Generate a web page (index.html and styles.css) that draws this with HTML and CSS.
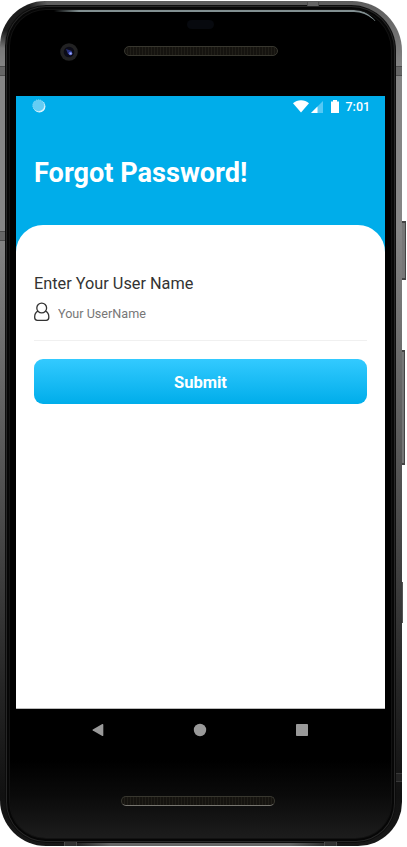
FILE: index.html
```
<!DOCTYPE html>
<html lang="en">
<head>
<meta charset="utf-8">
<meta name="viewport" content="width=device-width, initial-scale=1">
<title>Forgot Password</title>
<link rel="stylesheet" href="styles.css">
</head>
<body>
<div class="phone">
  <span class="side-key power"></span>
  <span class="side-key volume"></span>
  <span class="side-key lower"></span>
  <div class="bezel">
    <span class="band band-left-top"></span>
    <span class="band band-right-top"></span>
    <span class="band band-left-mid"></span>
    <span class="band band-right-low"></span>
    <span class="band band-top"></span>
    <span class="band band-foot-left"></span>
    <span class="band band-foot-right"></span>
    <span class="highlight"></span>
    <span class="sensor"></span>
    <div class="top-bezel">
      <svg class="camera" width="18" height="18" viewBox="0 0 18 18">
        <circle cx="9" cy="9" r="8.8" fill="#222223"/>
        <circle cx="9" cy="9" r="5.3" fill="#0b0b17"/>
        <path d="M6 6l3 1 3 1-1 4-3-1z" fill="#27307c"/>
        <circle cx="10.5" cy="10.5" r="1.8" fill="#6371d8"/>
        <circle cx="10.7" cy="10.5" r=".8" fill="#aebaff"/>
      </svg>
      <span class="speaker"></span>
    </div>
    <main class="screen">
      <header class="header">
        <div class="status">
          <svg width="14" height="14" viewBox="0 0 14 14">
            <circle cx="7.4" cy="7.4" r="6" fill="#e4f7fe"/>
            <circle cx="6.5" cy="6.5" r="5.8" fill="#65cdf4"/>
            <circle cx="6.5" cy="6.5" r="5.8" fill="none" stroke="#9bdff8" stroke-width=".8" stroke-dasharray="1 1"/>
          </svg>
          <div class="status-right">
            <svg width="78" height="16" viewBox="0 0 78 16">
              <path d="M0 4.200C4.200.2 11.800.2 16 4.200L8 13.500z" fill="#fff"/>
              <path d="M30 2v12H18z" fill="#55c9f5"/>
              <path d="M24.500 7.500V14H18z" fill="#fff"/>
              <path d="M38 2.500h2V1h4v1.500h2V14h-8z" fill="#fff"/>
              <text class="time" x="52.500" y="12.300">7:01</text>
            </svg>
          </div>
        </div>
        <h1>Forgot Password!</h1>
      </header>
      <form class="sheet">
        <label for="user">Enter Your User Name</label>
        <div class="field">
          <svg width="16" height="20" viewBox="0 0 16 20" fill="none" stroke="#333" stroke-width="1.300">
            <circle cx="7.700" cy="6" r="4.900"/>
            <path d="M4 9.200C1.600 10.300.7 12.200.7 14.800v.8c0 1.900.9 2.700 2.600 2.700h8.900c1.700 0 2.600-.8 2.600-2.700v-.8c0-2.600-.9-4.500-3.300-5.600"/>
          </svg>
          <input id="user" type="text" placeholder="Your UserName">
        </div>
        <button type="button">Submit</button>
      </form>
    </main>
    <nav class="nav">
      <svg width="12" height="14" viewBox="0 0 12 14"><path d="M.8 6.500Q0 7 .8 7.500L10.300 13q1 .3 1-.8V1.800q0-1.100-1-.8z" fill="#999"/></svg>
      <svg width="14" height="14" viewBox="0 0 14 14"><circle cx="7" cy="7" r="6.200" fill="#999"/></svg>
      <svg width="12" height="12" viewBox="0 0 12 12"><rect width="12" height="12" rx=".8" fill="#999"/></svg>
    </nav>
    <div class="chin"><span class="speaker speaker-low"></span></div>
  </div>
</div>
</body>
</html>
```
FILE: styles.css
```
* { box-sizing: border-box; }
body {
  margin: 0;
  height: 847px;
  overflow: hidden;
  background: #fff;
  font-family: Roboto, "Liberation Sans", sans-serif;
}
.phone {
  position: relative;
  width: 402px;
  height: 845px;
  margin-top: 1px;
  padding: 4px 6px 3px 5px;
  border-radius: 45px 50px 44px 46px;
  background:
    radial-gradient(circle at 10px 10px, #1c1c1c 20px, transparent 38px),
    linear-gradient(90deg, transparent 70px, #666 110px 290px, transparent 340px) bottom / 100% 4px no-repeat,
    linear-gradient(#5c5c5c 0, #858585 8%, #858585 27%, #666 45%, #444 65%, #242424 82%, #111 94%, #181818 100%);
}
.bezel {
  height: 838px;
  border-radius: 41px 45px 40px 41px;
  padding: 0 11px;
  background: linear-gradient(transparent 755px, #0a0a0a 790px, #1e1e1e 837px), #000;
  box-shadow: inset 0 0 0 1px #0c0c0c, inset 0 0 0 2px #262626, inset 0 0 0 4px #060606, inset 0 0 0 5px #121212;
}
.side-key {
  position: absolute;
  left: 402px;
  width: 4px;
  background: #777;
  border: 1px solid #444;
  border-width: 2px 1px 2px 0;
}
.power { top: 220px; height: 59px; }
.volume { top: 349px; height: 115px; width: 3px; }
.lower { top: 581px; height: 41px; width: 1px; border: 0; background: #555; }
.band { position: absolute; background: #666; border: 1px solid #4c4c4c; border-width: 1px 0; }
.band-left-top { left: 0; top: 65px; width: 5px; height: 10px; }
.band-right-top { left: 396px; top: 65px; width: 6px; height: 10px; }
.band-left-mid { left: 0; top: 230px; width: 5px; height: 10px; }
.band-right-low { left: 396px; top: 772px; width: 6px; height: 9px; background: #222; border-color: #383838; }
.band-top { left: 307px; top: 1px; width: 12px; height: 4px; border-width: 0 1px; }
.band-foot-left { left: 64px; top: 841px; width: 13px; height: 4px; background: #333; border-width: 0 1px; }
.band-foot-right { left: 324px; top: 841px; width: 13px; height: 4px; background: #333; border-width: 0 1px; }
.highlight {
  position: absolute;
  left: 54px;
  top: 9px;
  width: 327px;
  height: 27px;
  border-top: 2px solid #829092;
  border-radius: 0 31px 0 0;
  clip-path: inset(0 0 16px 0);
  mask-image: linear-gradient(90deg, transparent, #000 25px);
}
.sensor {
  position: absolute;
  left: 187px;
  top: 19px;
  width: 27px;
  height: 9px;
  border-radius: 5px;
  background: #07090e;
}
.top-bezel {
  display: flex;
  align-items: flex-start;
  height: 91px;
  padding-top: 38px;
  padding-left: 44px;
}
.speaker {
  width: 154px;
  height: 10px;
  margin-left: 46px;
  margin-top: 3px;
  border: 1px solid #38372f;
  border-radius: 6px;
  background: repeating-linear-gradient(90deg, #15130f 0 2px, #201e18 2px 3px);
}
.screen {
  display: flex;
  flex-direction: column;
  width: 369px;
  height: 613px;
  background: #00adea;
}
.header { height: 129px; }
.status {
  display: flex;
  justify-content: space-between;
  align-items: flex-start;
  height: 21px;
  padding: 3px 14px 0 16px;
}
.status-right { display: flex; }
.time {
  fill: #fff;
  font-size: 12.500px;
  font-weight: 500;
}
h1 {
  margin: 39px 0 0 18px;
  color: #fff;
  font-size: 27.100px;
  line-height: 34px;
  font-weight: 700;
}
.sheet {
  flex: 1;
  padding: 47px 18px 0;
  border-bottom: 1px solid #bbb;
  border-radius: 27px 27px 0 0;
  background: #fff;
}
label {
  display: block;
  color: #333;
  font-size: 16.300px;
  line-height: 24px;
}
.field {
  display: flex;
  align-items: flex-start;
  height: 45px;
  padding-top: 6px;
  border-bottom: 1px solid #f0f0f0;
}
input {
  width: 280px;
  height: 18px;
  margin: 3px 0 0 8px;
  padding: 0;
  border: 0;
  outline: 0;
  background: transparent;
  color: #333;
  font: 12.600px/18px Roboto, "Liberation Sans", sans-serif;
}
input::placeholder { color: #777; opacity: 1; }
button {
  display: block;
  width: 333px;
  height: 45px;
  margin-top: 18px;
  padding: 2px 0 0;
  border: 0;
  border-radius: 9px;
  background: linear-gradient(#33caff, #00adea);
  color: #fff;
  font: 700 16.500px/20px Roboto, "Liberation Sans", sans-serif;
}
.nav {
  display: flex;
  align-items: center;
  justify-content: space-between;
  height: 42px;
  padding: 0 77px 0 76px;
}
.chin { padding-top: 45px; padding-left: 105px; }
.speaker-low { display: block; margin: 0; border-bottom-color: #77756f; }
```
